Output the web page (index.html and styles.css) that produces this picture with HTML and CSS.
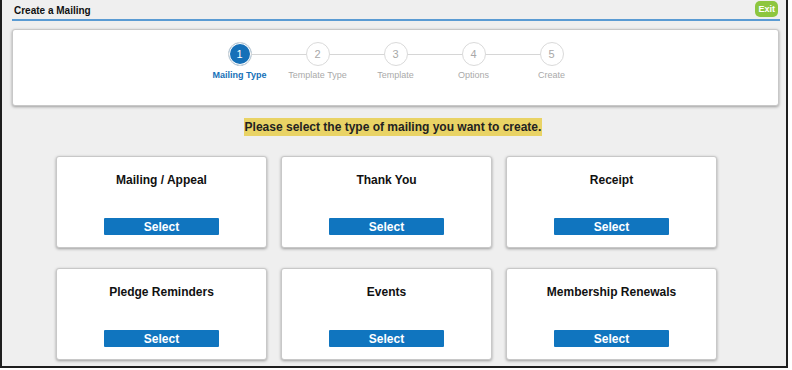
FILE: index.html
```html
<!DOCTYPE html>
<html lang="en">
<head>
  <meta charset="UTF-8" />
  <title>Create a Mailing</title>
  <link rel="stylesheet" href="styles.css">
</head>
<body>
  <div class="frame">

    <!-- Title bar -->
    <div class="titlebar">
      <span class="title">Create a Mailing</span>
      <button class="exit">Exit</button>
    </div>

    <!-- Wizard steps -->
    <div class="steps-card">
      <div class="steps">
        <div class="step active">
          <div class="circle">1</div>
          <div class="label">Mailing Type</div>
        </div>
        <div class="step">
          <div class="circle">2</div>
          <div class="label">Template Type</div>
        </div>
        <div class="step">
          <div class="circle">3</div>
          <div class="label">Template</div>
        </div>
        <div class="step">
          <div class="circle">4</div>
          <div class="label">Options</div>
        </div>
        <div class="step">
          <div class="circle">5</div>
          <div class="label">Create</div>
        </div>
      </div>
    </div>

    <div class="prompt-row">
      <span class="prompt">Please select the type of mailing you want to create.</span>
    </div>

    <!-- Mailing types -->
    <div class="types">
      <div class="type-card">
        <h3>Mailing / Appeal</h3>
        <button class="select">Select</button>
      </div>
      <div class="type-card">
        <h3>Thank You</h3>
        <button class="select">Select</button>
      </div>
      <div class="type-card">
        <h3>Receipt</h3>
        <button class="select">Select</button>
      </div>
      <div class="type-card">
        <h3>Pledge Reminders</h3>
        <button class="select">Select</button>
      </div>
      <div class="type-card">
        <h3>Events</h3>
        <button class="select">Select</button>
      </div>
      <div class="type-card">
        <h3>Membership Renewals</h3>
        <button class="select">Select</button>
      </div>
    </div>

  </div>
</body>
</html>
```

FILE: styles.css
```css
body {
  margin: 0;
  background-color: #fff;
  font-family: "Liberation Sans", Arial, Helvetica, sans-serif;
  color: #111;
}

.frame {
  width: 784px;
  height: 366px;
  border: 2px solid #1e1e1e;
  border-top: 0;
  background-color: #efefef;
  overflow: hidden;
}

.titlebar {
  display: flex;
  justify-content: space-between;
  align-items: center;
  height: 19px;
  margin: 0 6px 0 10px;
  border-bottom: 2px solid #5a9bd3;
}

.title {
  font-size: 10px;
  font-weight: bold;
  padding-left: 2px;
  padding-top: 1px;
}

.exit {
  background-color: #8dc63f;
  color: #fff;
  border: none;
  border-radius: 5px;
  font-family: inherit;
  font-size: 9px;
  font-weight: bold;
  padding: 3px 3px;
  margin-bottom: 1px;
  margin-right: 2px;
}

.steps-card {
  width: 765px;
  height: 75px;
  margin: 8px 0 0 10px;
  background-color: #fff;
  border: 1px solid #c8c8c8;
  border-radius: 3px;
  box-shadow: 0 1px 3px rgba(0,0,0,0.35);
}

.steps {
  display: flex;
  justify-content: center;
  padding-top: 12px;
}

.step {
  position: relative;
  width: 78px;
  display: flex;
  flex-direction: column;
  align-items: center;
}

.step + .step::before {
  content: "";
  position: absolute;
  top: 12px;
  left: -50%;
  width: 100%;
  height: 1px;
  background-color: #d6d6d6;
}

.circle {
  position: relative;
  z-index: 1;
  width: 22px;
  height: 22px;
  border: 1px solid #dadada;
  border-radius: 50%;
  background-color: #fff;
  color: #a8a8a8;
  font-size: 11px;
  line-height: 22px;
  text-align: center;
}

.label {
  margin-top: 4px;
  font-size: 9px;
  color: #aaa;
  white-space: nowrap;
}

.step.active .circle {
  background-color: #1570b8;
  color: #fff;
  box-shadow: inset 0 0 0 1px #fff;
}

.step.active .label {
  color: #1570b8;
  font-weight: bold;
}

.prompt-row {
  text-align: center;
  margin: 11px 0 0 0;
  padding-right: 2px;
}

.prompt {
  background-color: #e9d365;
  color: #222;
  font-size: 12px;
  font-weight: bold;
  padding: 2px 1px;
  line-height: 17px;
}

.types {
  display: grid;
  grid-template-columns: repeat(3, 211px);
  column-gap: 14px;
  row-gap: 20px;
  margin: 20px 0 0 54px;
}

.type-card {
  height: 90px;
  background-color: #fff;
  border: 1px solid #c8c8c8;
  border-radius: 3px;
  box-shadow: 0 1px 3px rgba(0,0,0,0.35);
  display: flex;
  flex-direction: column;
  align-items: center;
}

.type-card h3 {
  margin: 16px 0 0 0;
  font-size: 12px;
  line-height: 14px;
  color: #111;
}

.select {
  margin-top: 31px;
  width: 115px;
  height: 17px;
  background-color: #1075bf;
  color: #fff;
  border: none;
  border-radius: 1px;
  font-family: inherit;
  font-size: 12px;
  font-weight: bold;
  padding: 0;
}
```
